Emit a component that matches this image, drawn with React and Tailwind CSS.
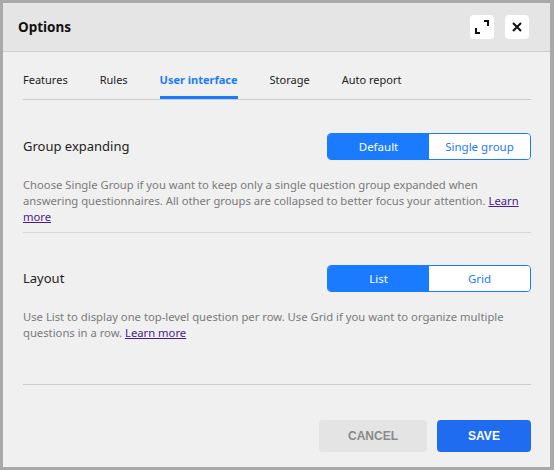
import React, { useState } from 'react';

const tabs = ['Features', 'Rules', 'User interface', 'Storage', 'Auto report'];

const Segmented = ({ options, value, onChange }) => (
  <div className="flex w-[204px] h-[27px] rounded-[4px] border border-[#1b7bff] overflow-hidden text-[11.5px]">
    {options.map((opt) => (
      <button
        key={opt}
        onClick={() => onChange(opt)}
        className={`flex-1 flex items-center justify-center ${
          value === opt ? 'bg-[#1b7bff] text-white' : 'bg-white text-[#1b7bff]'
        }`}
      >
        {opt}
      </button>
    ))}
  </div>
);

const Setting = ({ title, options, value, onChange, children }) => (
  <div>
    <div className="flex items-center justify-between">
      <span className="text-[13px] text-[#222]">{title}</span>
      <Segmented options={options} value={value} onChange={onChange} />
    </div>
    <p className="mt-[17px] text-[11.25px] leading-[16px] text-[#7a7a7a]">{children}</p>
  </div>
);

export default function App() {
  const [tab, setTab] = useState('User interface');
  const [grouping, setGrouping] = useState('Default');
  const [layout, setLayout] = useState('List');

  return (
    <div className="w-[554px] h-[470px] border-[3px] border-r-4 border-[#a9a9a9] bg-[#f0f0f0] flex flex-col font-['Noto_Sans',sans-serif]">
      {/* header */}
      <div className="h-[49px] shrink-0 bg-[#e5e5e5] border-b border-[#cfcfcf] flex items-center justify-between pl-[15px] pr-[21px]">
        <span className="text-[13.5px] font-bold text-[#111]">Options</span>
        <div className="flex gap-[11px]">
          <button className="w-[24px] h-[24px] rounded-[4px] bg-white flex items-center justify-center">
            <svg width="14" height="14" viewBox="0 0 14 14" fill="none" stroke="#111" strokeWidth="2">
              <path d="M1 8v5h4" />
              <path d="M9 1h4v5" />
            </svg>
          </button>
          <button className="w-[24px] h-[24px] rounded-[4px] bg-white flex items-center justify-center">
            <svg width="10" height="10" viewBox="0 0 10 10" fill="none" stroke="#111" strokeWidth="2">
              <path d="M1 1l8 8M9 1l-8 8" />
            </svg>
          </button>
        </div>
      </div>

      <div className="flex-1 flex flex-col px-[20px] pr-[19px]">
        {/* tabs */}
        <div className="flex gap-[32px] border-b border-[#cdcdcd] h-[48px] items-end text-[11px]">
          {tabs.map((t) => (
            <button
              key={t}
              onClick={() => setTab(t)}
              className={`pb-[8px] border-b-[3px] ${
                tab === t ? 'border-[#1b7bff] text-[#1b7bff] font-bold' : 'border-transparent text-[#222]'
              }`}
            >
              {t}
            </button>
          ))}
        </div>

        <div className="pt-[33px]">
          <Setting title="Group expanding" options={['Default', 'Single group']} value={grouping} onChange={setGrouping}>
            Choose Single Group if you want to keep only a single question group expanded when answering
            questionnaires. All other groups are collapsed to better focus your attention.{' '}
            <a href="#" className="text-[#4b1a8c] underline">Learn more</a>
          </Setting>
          <div className="border-b border-[#d6d6db] mt-[7px]" />
        </div>

        <div className="pt-[32px]">
          <Setting title="Layout" options={['List', 'Grid']} value={layout} onChange={setLayout}>
            Use List to display one top-level question per row. Use Grid if you want to organize multiple
            questions in a row.{' '}
            <a href="#" className="text-[#4b1a8c] underline">Learn more</a>
          </Setting>
        </div>

        <div className="border-b border-[#cdcdcd] mt-[43px]" />

        <div className="flex justify-end gap-[10px] mt-[35px]">
          <button className="w-[108px] h-[32px] rounded-[4px] bg-[#e4e4e4] text-[#8a8a8a] text-[12px] font-bold font-['Liberation_Sans',sans-serif]">
            CANCEL
          </button>
          <button className="w-[94px] h-[32px] rounded-[4px] bg-[#1f6cf0] text-white text-[12px] font-bold font-['Liberation_Sans',sans-serif]">
            SAVE
          </button>
        </div>
      </div>
    </div>
  );
}
